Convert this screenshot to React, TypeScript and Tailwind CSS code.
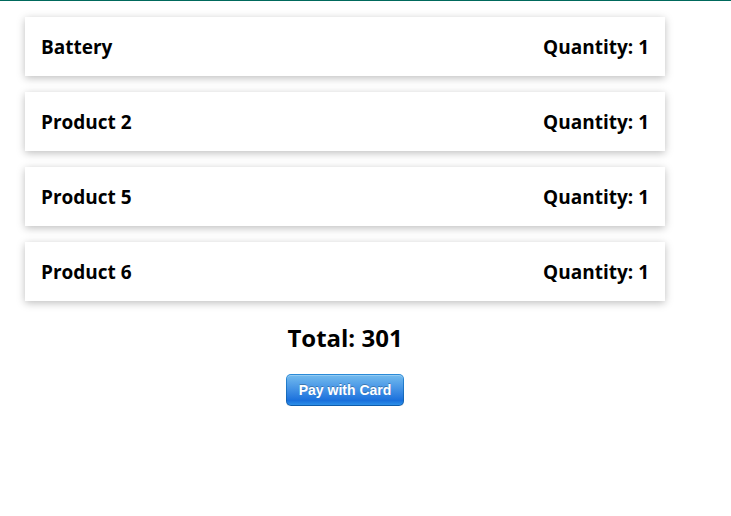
const items = [
  { name: "Battery", quantity: 1 },
  { name: "Product 2", quantity: 1 },
  { name: "Product 5", quantity: 1 },
  { name: "Product 6", quantity: 1 },
];

export default function App() {
  return (
    <div className="border-t border-[#00695c] bg-white font-['Open_Sans','Noto_Sans',sans-serif] text-black">
      <main className="mr-[66px] ml-[25px] flex max-w-[640px] flex-col pt-4">
        <ul className="flex flex-col gap-4">
          {items.map((item) => (
            <li
              key={item.name}
              className="flex items-center justify-between bg-white px-4 pt-4 pb-[15px] text-[19px] leading-7 font-bold shadow-[0_2px_8px_rgba(0,0,0,0.26)]"
            >
              <h2>{item.name}</h2>
              <p>Quantity: {item.quantity}</p>
            </li>
          ))}
        </ul>
        <h2 className="mt-5 text-center text-2xl leading-[33px] font-bold">Total: 301</h2>
        <button
          type="button"
          className="mt-5 self-center rounded-[5px] bg-linear-to-b from-[#2b8bd8] to-[#0d5bab] p-px font-['Liberation_Sans',sans-serif] text-sm font-bold text-white shadow-[0_1px_0_rgba(0,0,0,0.1)]"
        >
          <span className="block rounded-[4px] bg-linear-to-b from-[#73bbee] via-[#1970dc] via-85% to-[#2d8fe8] px-3 leading-[30px] shadow-[inset_0_1px_0_rgba(255,255,255,0.25)] [text-shadow:0_-1px_0_rgba(0,0,0,0.25)]">
            Pay with Card
          </span>
        </button>
      </main>
    </div>
  );
}
